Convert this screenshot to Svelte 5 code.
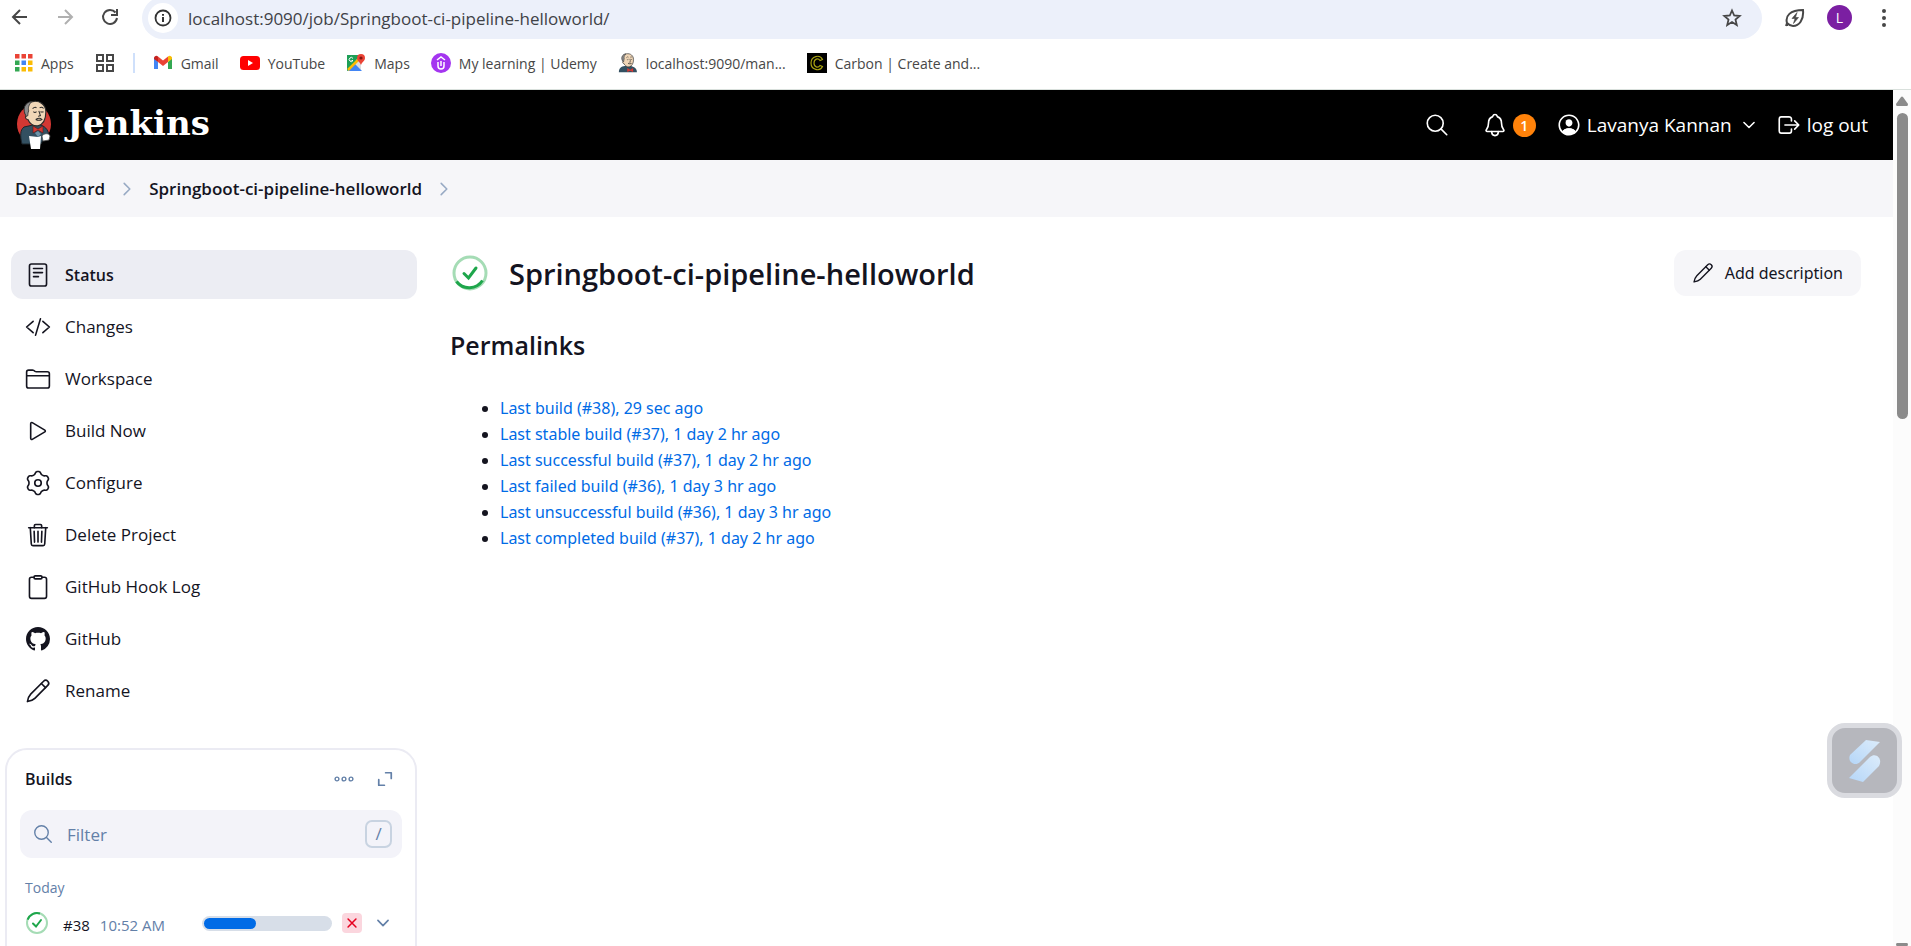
<script>
  const gear = (() => {
    const points = [];
    for (let i = 0; i < 120; i++) {
      const a = (i / 120) * Math.PI * 2;
      const r = 202 - 26 * Math.tanh(1.6 * Math.cos(6 * a));
      points.push(`${(256 + r * Math.cos(a)).toFixed(1)} ${(256 + r * Math.sin(a)).toFixed(1)}`);
    }
    return `M${points.join('L')}Z`;
  })();

  const icons = {
    search: ['M221 64a157 157 0 1 0 0 314a157 157 0 0 0 0-314z', 'M338 338L448 448'],
    bell: [
      'M427.68 351.43C402 320 383.87 304 383.87 217.35 383.87 138 343.35 109.73 310 96c-4.43-1.82-8.6-6-9.95-10.55C294.2 65.54 277.8 48 256 48s-38.21 17.55-44 37.47c-1.35 4.6-5.52 8.71-9.95 10.53-33.39 13.75-73.87 41.92-73.87 121.35C128.13 304 110 320 84.32 351.43 73.68 364.45 83 384 101.61 384h308.88c18.51 0 27.77-19.61 17.19-32.57z',
      'M320 384v16a64 64 0 0 1-128 0v-16'
    ],
    logout: [
      'M304 336v40a40 40 0 0 1-40 40H104a40 40 0 0 1-40-40V136a40 40 0 0 1 40-40h152c22 0 48 18 48 40v40',
      'M368 336l80-80-80-80M176 256h256'
    ],
    chevron: ['M112 184l144 144 144-144'],
    next: ['M184 112l144 144-144 144'],
    status: [
      'M128 40h256a40 40 0 0 1 40 40v352a40 40 0 0 1-40 40H128a40 40 0 0 1-40-40V80a40 40 0 0 1 40-40z',
      'M168 128h176M168 208h176M168 288h96'
    ],
    code: ['M160 368L32 256l128-112M352 368l128-112-128-112M304 96l-96 320'],
    folder: [
      'M440 432H72a40 40 0 0 1-40-40V120a40 40 0 0 1 40-40h75.89a40 40 0 0 1 22.19 6.72l27.84 18.56a40 40 0 0 0 22.19 6.72H440a40 40 0 0 1 40 40v240a40 40 0 0 1-40 40zM32 192h448'
    ],
    play: [
      'M112 111v290c0 17.44 17 28.52 31 20.16l247.9-148.37c12.12-7.25 12.12-26.33 0-33.58L143 90.84c-14-8.36-31 2.72-31 20.16z'
    ],
    gear: [gear, 'M256 192a64 64 0 1 0 0 128a64 64 0 0 0 0-128z'],
    trash: [
      'M104 112l20 320c1 18.500 14.400 32 32 32h200c17.670 0 31-13.500 32-32l20-320M72 112h368',
      'M184 112V72a24 24 0 0 1 24-24h96a24 24 0 0 1 24 24v40M256 184v212M180 184l8 212M332 184l-8 212'
    ],
    clipboard: [
      'M336 64h48a40 40 0 0 1 40 40v336a40 40 0 0 1-40 40H128a40 40 0 0 1-40-40V104a40 40 0 0 1 40-40h48',
      'M202 36h108a24 24 0 0 1 24 24v12a24 24 0 0 1-24 24H202a24 24 0 0 1-24-24V60a24 24 0 0 1 24-24z'
    ],
    pen: [
      'M366 64a57 57 0 0 1 82 82L194 400c-32 32-92 54-146 64c10-54 32-114 64-146z',
      'M322 108l82 82'
    ],
    expand: ['M272 96h144v144M96 272v144h144'],
    cross: ['M112 112l288 288M400 112L112 400']
  };

  const github =
    'M8 0C3.58 0 0 3.58 0 8c0 3.54 2.29 6.53 5.47 7.59.4.07.55-.17.55-.38 0-.19-.01-.82-.01-1.49-2.01.37-2.53-.49-2.69-.94-.09-.23-.48-.94-.82-1.13-.28-.15-.68-.52-.01-.53.63-.01 1.08.58 1.23.82.72 1.21 1.87.87 2.33.66.07-.52.28-.87.51-1.07-1.78-.2-3.64-.89-3.64-3.95 0-.87.31-1.59.82-2.15-.08-.2-.36-1.02.08-2.12 0 0 .67-.21 2.2.82.64-.18 1.32-.27 2-.27s1.36.09 2 .27c1.53-1.04 2.2-.82 2.2-.82.44 1.1.16 1.92.08 2.12.51.56.82 1.27.82 2.15 0 3.07-1.87 3.75-3.65 3.95.29.25.54.73.54 1.48 0 1.07-.01 1.93-.01 2.2 0 .21.15.46.55.38A8.01 8.01 0 0016 8c0-4.42-3.58-8-8-8z';

  const tasks = [
    ['Status', 'status'],
    ['Changes', 'code'],
    ['Workspace', 'folder'],
    ['Build Now', 'play'],
    ['Configure', 'gear'],
    ['Delete Project', 'trash'],
    ['GitHub Hook Log', 'clipboard'],
    ['GitHub', 'github'],
    ['Rename', 'pen']
  ];

  const permalinks = [
    'Last build (#38), 29 sec ago',
    'Last stable build (#37), 1 day 2 hr ago',
    'Last successful build (#37), 1 day 2 hr ago',
    'Last failed build (#36), 1 day 3 hr ago',
    'Last unsuccessful build (#36), 1 day 3 hr ago',
    'Last completed build (#37), 1 day 2 hr ago'
  ];

  const bookmarks = [
    ['gmail', 'Gmail'],
    ['youtube', 'YouTube'],
    ['maps', 'Maps'],
    ['udemy', 'My learning | Udemy'],
    ['jenkins', 'localhost:9090/man...'],
    ['carbon', 'Carbon | Create and...']
  ];

  const appColors = ['#ea4335', '#ea4335', '#ea4335', '#34a853', '#4285f4', '#fbbc04', '#34a853', '#fbbc04', '#fbbc04'];
  const progress = 41;
  let url = $state('localhost:9090/job/Springboot-ci-pipeline-helloworld/');
  let filter = $state('');
</script>

{#snippet icon(name, size, width = 32)}
  {#if name === 'github'}
    <svg width={size} height={size} viewBox="0 0 16 16" aria-hidden="true"><path d={github} fill="currentColor" /></svg>
  {:else}
    <svg width={size} height={size} viewBox="0 0 512 512" fill="none" stroke="currentColor" stroke-width={width} stroke-linecap="round" stroke-linejoin="round" aria-hidden="true">
      {#each icons[name] as d}<path {d} />{/each}
    </svg>
  {/if}
{/snippet}

{#snippet butlerHead()}
  <path d="M12 20C7 12 10 3 20 2c10-2 17 5 17 13 0 9-3 16-10 18-6 1-11-3-13-8-3 0-4-3-2-5z" fill="#f0d6b7" stroke="#2b2b2b" stroke-width="1.500" />
  <path d="M12 21C6 12 10 3 19 2c-4 4-5 8-4 12-1 2-1 4-1 6z" fill="#8c8c8c" stroke="#2b2b2b" />
  <path d="M20 11q3-3 5-1M29 10q3-2 5 1M21 15q2 2 4 0M30 15q2 1 4 0M28 14l2 6-3 1M24 25q5-3 8 0-4 2-8 0" fill="none" stroke="#2b2b2b" stroke-width="1.300" />
{/snippet}

<div class="browser">
  <div class="toolbar">
    <div class="history">
      <button aria-label="Back"><svg width="18" height="18" viewBox="0 0 18 18" fill="none" stroke="#474747" stroke-width="2"><path d="M16 9H3M9 2L2 9l7 7" /></svg></button>
      <button aria-label="Forward"><svg width="18" height="18" viewBox="0 0 18 18" fill="none" stroke="#b0b0b0" stroke-width="2"><path d="M2 9h13M9 2l7 7-7 7" /></svg></button>
      <button aria-label="Reload"><svg width="18" height="18" viewBox="0 0 18 18" fill="none" stroke="#474747" stroke-width="2"><path d="M14.500 4.500A7 7 0 1 0 16 10M16 1v6h-6" /></svg></button>
    </div>
    <div class="address">
      <button class="info" aria-label="View site information">
        <svg width="18" height="18" viewBox="0 0 18 18"><circle cx="9" cy="9" r="7.500" fill="none" stroke="#333" stroke-width="1.800" /><path d="M9 8v5M9 5v1.800" stroke="#333" stroke-width="2" /></svg>
      </button>
      <input class="url" aria-label="Address" bind:value={url} />
      <button class="star" aria-label="Bookmark this page">
        <svg width="20" height="20" viewBox="0 0 20 20"><path d="M10 2.500l2.200 5 5.500.5-4.200 3.600 1.300 5.400L10 14.100 5.200 17l1.300-5.400L2.300 8l5.500-.5z" fill="none" stroke="#474747" stroke-width="1.800" /></svg>
      </button>
    </div>
    <button class="leaf" aria-label="Energy Saver">
      <svg width="20" height="20" viewBox="0 0 20 20" fill="none" stroke="#474747" stroke-width="2"><path d="M2 18v-3c-2-7 3-13 16-13 1 10-4 16-10 16-3 0-4-1-6-3l-1 3" /><path d="M12 4.500L7 10.500h3l-1.500 5 5-6h-3z" fill="#474747" stroke-width=".6" /></svg>
    </button>
    <button class="avatar" aria-label="Profile">L</button>
    <button class="menu" aria-label="Menu"><svg width="6" height="20" viewBox="0 0 6 20" fill="#474747"><circle cx="3" cy="3" r="2" /><circle cx="3" cy="10" r="2" /><circle cx="3" cy="17" r="2" /></svg></button>
  </div>
  <nav class="bookmarks" aria-label="Bookmarks">
    <a href="#apps" class="apps">
      <svg width="18" height="18" viewBox="0 0 18 18" aria-hidden="true">
        {#each appColors as color, i}<rect x={(i % 3) * 6.500} y={Math.floor(i / 3) * 6.500} width="4.500" height="4.500" fill={color} />{/each}
      </svg>
      Apps
    </a>
    <button class="groups" aria-label="Tab groups">
      <svg width="20" height="20" viewBox="0 0 20 20" fill="none" stroke="#474747" stroke-width="2"><path d="M2 2h6v6H2zM12 2h6v6h-6zM2 12h6v6H2zM12 12h6v6h-6z" /></svg>
    </button>
    <span class="separator"></span>
    {#each bookmarks as [kind, label]}
      <a href="#{kind}" class="bookmark">
        <svg width="20" height="20" viewBox="0 0 20 20" aria-hidden="true">
          {#if kind === 'gmail'}
            <path d="M1 4v12h4V9z" fill="#4285f4" /><path d="M19 4v12h-4V9z" fill="#34a853" />
            <path d="M1 5.500C1 3 3.500 2 5 3.500V9L1 6z" fill="#c5221f" /><path d="M19 5.500C19 3 16.500 2 15 3.500V9l4-3z" fill="#fbbc04" />
            <path d="M5 3.500l5 4 5-4V9l-5 4-5-4z" fill="#ea4335" />
          {:else if kind === 'youtube'}
            <rect y="3" width="20" height="14" rx="3.500" fill="#f00" /><path d="M8 7l5 3-5 3z" fill="#fff" />
          {:else if kind === 'maps'}
            <path d="M1 2h14v16H1z" fill="#dcdcdc" /><path d="M1 2h13L3 17l-2 1z" fill="#1e9f57" />
            <path d="M2 18l7-7 7 7z" fill="#4285f4" /><path d="M2 17L14 5" stroke="#fbbc04" stroke-width="2.500" />
            <path d="M15 12C14 9 11 8 11 5a4 4 0 0 1 8 0c0 3-3 4-4 7z" fill="#ea4335" /><circle cx="15" cy="5" r="1.600" fill="#811411" />
            <path d="M7 5.500a2 2 0 1 0 0 2H5.500" fill="none" stroke="#fff" />
          {:else if kind === 'udemy'}
            <circle cx="10" cy="10" r="10" fill="#a435f0" /><path d="M6 7l4-3 4 3M7 9v4c0 4 6 4 6 0V9M10 8v5" fill="none" stroke="#fff" stroke-width="1.500" />
          {:else if kind === 'jenkins'}
            <g transform="scale(.42)">
              <path d="M2 46c0-10 6-14 14-15h15c9 3 14 6 14 15z" fill="#335061" />{@render butlerHead()}
              <path d="M22 36l7 4 7-4v9l-7-3-7 3z" fill="#d33833" />
            </g>
          {:else}
            <rect width="20" height="20" fill="#000" /><path d="M15.500 6.500C13 1 4 3 4 10s9 9 11.500 3.500l-2.500-1c-2 3-6 1.500-6-2.500s4-5.500 6-2.500z" fill="none" stroke="#a8a212" stroke-width="1.200" />
          {/if}
        </svg>
        {label}
      </a>
    {/each}
  </nav>

  <div class="viewport">
    <div class="page">
      <header>
        <a class="brand" href="#home">
          <svg width="36" height="50" viewBox="0 0 36 50" aria-hidden="true">
            <ellipse cx="18" cy="24" rx="17" ry="19" fill="#d33833" />
            <path d="M6 44C4 36 4 30 8 27l9-2h8c5 2 8 6 8 12l-6 3-2 4z" fill="#335061" stroke="#1b242b" />
            <g transform="translate(1 0) scale(.78)">{@render butlerHead()}</g>
            <path d="M17 26l5 3 5-3v7l-5-3-5 3z" fill="#d33833" stroke="#5c1714" stroke-width=".6" />
            <path d="M19 33l3-2 3 3-3 3z" fill="#6d93a8" />
            <path d="M13 36l9 1 3-1-1 13H15z" fill="#fff" />
            <path d="M26 36c2-3 7-3 8 0l-1 4-6 1z" fill="#fff" stroke="#555" stroke-width=".8" />
          </svg>
          <span>Jenkins</span>
        </a>
        <div class="actions">
          <button class="find" aria-label="Search">{@render icon('search', 26)}</button>
          <button class="alerts" aria-label="Notifications">{@render icon('bell', 26)}<span class="count">1</span></button>
          <a class="user" href="#user">
            <svg width="26" height="26" viewBox="0 0 512 512" fill="currentColor" aria-hidden="true">
              <path d="M258.9 48C141.92 46.42 46.42 141.92 48 258.9c1.56 112.19 92.91 203.54 205.1 205.1 117 1.6 212.48-93.9 210.88-210.88C462.44 140.91 371.09 49.56 258.9 48zm126.42 327.25a4 4 0 01-6.14-.32 124.27 124.27 0 00-32.35-29.59C321.37 329 289.11 320 256 320s-65.37 9-90.83 25.34a124.24 124.24 0 00-32.35 29.58 4 4 0 01-6.14.32A175.32 175.32 0 0180 259c-1.63-97.31 78.22-178.76 175.57-179S432 158.81 432 256a175.32 175.32 0 01-46.68 119.25z" />
              <path d="M126 375c22-34 76-55 130-55s108 21 130 55c-70 75-190 75-260 0z" />
              <path d="M256 144c-19.72 0-37.55 7.39-50.22 20.82s-19 32-17.57 51.93C191.11 256 221.52 288 256 288s64.83-32 67.79-71.24c1.48-19.74-4.8-38.14-17.68-51.82C293.39 151.44 275.59 144 256 144z" />
            </svg>
            Lavanya Kannan
          </a>
          <button class="user-menu" aria-label="User menu">{@render icon('chevron', 18, 44)}</button>
          <a class="logout" href="#logout">{@render icon('logout', 26)}log out</a>
        </div>
      </header>

      <nav class="crumbs" aria-label="Breadcrumb">
        <a href="#dashboard">Dashboard</a>
        {@render icon('next', 20, 40)}
        <a href="#job">Springboot-ci-pipeline-helloworld</a>
        {@render icon('next', 20, 40)}
      </nav>

      <div class="body">
        <aside>
          <nav class="tasks" aria-label="Tasks">
            {#each tasks as [label, name], i}
              <a href="#{name}" class:active={i === 0}>{@render icon(name, name === 'github' ? 24 : 26)}{label}</a>
            {/each}
          </nav>

          <section class="builds">
            <div class="builds-head">
              <h2>Builds</h2>
              <button aria-label="More"><svg width="20" height="6" viewBox="0 0 20 6" fill="none" stroke="currentColor" stroke-width="1.400"><circle cx="3" cy="3" r="1.900" /><circle cx="10" cy="3" r="1.900" /><circle cx="17" cy="3" r="1.900" /></svg></button>
              <button aria-label="Expand">{@render icon('expand', 20, 44)}</button>
            </div>
            <label class="filter">
              {@render icon('search', 22)}
              <input placeholder="Filter" aria-label="Filter builds" bind:value={filter} />
              <kbd>/</kbd>
            </label>
            <h3>Today</h3>
            <div class="build">
              <svg width="24" height="24" viewBox="0 0 24 24" fill="none" stroke-width="2" aria-hidden="true">
                <circle cx="12" cy="12" r="10" stroke="#a5dcb5" /><path d="M2.600 8.600A10 10 0 0 1 15 2.500" stroke="#1ea64b" />
                <path d="M8 12.500l3 3L16 9" stroke="#1ea64b" stroke-linecap="round" />
              </svg>
              <a href="#b38">#38</a>
              <time>10:52 AM</time>
              <div class="progress" role="progressbar" aria-label="Build progress" aria-valuenow={progress}><span style:width="{progress}%"></span></div>
              <button class="stop" aria-label="Stop build">{@render icon('cross', 14, 56)}</button>
              <button class="more" aria-label="Build menu">{@render icon('chevron', 18, 48)}</button>
            </div>
          </section>
        </aside>

        <main>
          <div class="title">
            <svg width="36" height="36" viewBox="0 0 36 36" fill="none" stroke-width="3" aria-hidden="true">
              <circle cx="18" cy="18" r="16" stroke="#a5dcb5" /><path d="M4.500 26.500a16 16 0 0 0 26-1" stroke="#1ea64b" />
              <path d="M12 18.500l4.500 4.500L24 13" stroke="#1ea64b" stroke-linecap="round" />
            </svg>
            <h1>Springboot-ci-pipeline-helloworld</h1>
            <button>{@render icon('pen', 22)}Add description</button>
          </div>
          <h2>Permalinks</h2>
          <ul>
            {#each permalinks as text}<li><a href="#permalink">{text}</a></li>{/each}
          </ul>
        </main>
      </div>
    </div>

    <div class="scrollbar" aria-hidden="true">
      <svg width="12" height="10" viewBox="0 0 12 10" fill="#8b8b8b"><path d="M5 1q1-1 2 0l5 7q0 2-1 2H1q-1 0-1-2z" /></svg>
      <span class="thumb"></span>
      <svg class="down" width="12" height="10" viewBox="0 0 12 10" fill="#8b8b8b"><path d="M5 9q1 1 2 0l5-7q0-2-1-2H1Q0 0 0 2z" /></svg>
    </div>
  </div>
</div>

<button class="widget" aria-label="Open assistant">
  <svg width="34" height="44" viewBox="0 0 34 44" aria-hidden="true">
    <defs><linearGradient id="glow" x1="0" y1="1" x2="1" y2="0"><stop offset="0" stop-color="#b5d6f8" /><stop offset="1" stop-color="#dcecfb" /></linearGradient></defs>
    <path d="M18 1l14 2L12 23c-5 5-13 0-10-7z" fill="url(#glow)" />
    <path d="M1 39l21-21c6-5 13 2 9 9L15 43z" fill="url(#glow)" />
  </svg>
</button>

<style>
  :global(body) { margin: 0; background: #fff; overflow: hidden; }
  .browser, .widget { font-family: 'Open Sans', 'Noto Sans', sans-serif; color: #14141f; font-size: 17px; }
  .browser { display: flex; flex-direction: column; height: 100vh; }
  button { font: inherit; color: inherit; background: none; border: 0; padding: 0; display: flex; align-items: center; justify-content: center; }
  a { color: inherit; text-decoration: none; }
  input { font: inherit; border: 0; background: none; padding: 0; min-width: 0; outline: none; }
  svg { flex: none; display: block; }
  h1, h2, h3 { margin: 0; font-weight: 600; }

  .toolbar { display: flex; align-items: flex-start; height: 39px; }
  .history { display: flex; gap: 27px; padding: 8px 23px 0 11px; }
  .address { flex: 1; display: flex; align-items: center; height: 42px; margin-top: -3px; background: #ecf0fa; border-radius: 21px; padding: 0 20px 0 6px; }
  .info { width: 30px; height: 30px; border-radius: 50%; background: #fff; }
  .url { flex: 1; margin-left: 10px; color: #3f4247; }
  .leaf { margin: 8px 22px 0 23px; }
  .avatar { width: 25px; height: 25px; margin-top: 5px; border-radius: 50%; background: #7b1fa2; color: #fff; font-size: 14px; }
  .menu { margin: 8px 24px 0 29px; }

  .bookmarks { display: flex; align-items: center; height: 48px; padding: 0 0 2px 15px; border-bottom: 1px solid #d9e0dc; color: #474747; font-size: 14px; }
  .apps, .bookmark { display: flex; align-items: center; gap: 8px; }
  .groups { margin: 0 18px 0 21px; }
  .separator { width: 2px; height: 20px; background: #cfe0fb; margin-right: 18px; }
  .bookmark { margin-right: 21px; }

  .viewport { flex: 1; display: flex; min-height: 0; }
  .page { flex: 1; overflow: hidden; }
  header { display: flex; align-items: center; justify-content: space-between; height: 70px; padding: 0 25px 0 16px; background: #000; color: #fff; }
  .brand { display: flex; align-items: center; gap: 15px; font: bold 34px 'DejaVu Serif', serif; }
  .brand span { padding-bottom: 4px; }
  .actions { display: flex; align-items: center; font-size: 19px; }
  .find { margin-right: 32px; }
  .alerts { gap: 5px; margin-right: 20px; }
  .count { width: 23px; height: 23px; border-radius: 50%; background: #ff820a; font-size: 14px; line-height: 23px; font-weight: 600; text-align: center; }
  .user, .logout { display: flex; align-items: center; gap: 5px; }
  .user-menu { margin: 0 18px 0 8px; }

  .crumbs { display: flex; align-items: center; gap: 12px; height: 57px; padding-left: 15px; background: #f6f6f9; font-size: 17px; font-weight: 600; }
  .crumbs svg { color: #98aac4; }

  .body { display: flex; align-items: flex-start; }
  aside { flex: none; width: 417px; padding-top: 33px; }
  .tasks { display: flex; flex-direction: column; gap: 3px; padding-left: 11px; }
  .tasks a { display: flex; align-items: center; gap: 14px; height: 49px; padding-left: 14px; border-radius: 12px; }
  .tasks .active { background: #ecedf3; font-size: 16px; font-weight: 600; }
  .tasks svg { width: 26px; }

  .builds { margin: 33px 0 0 5px; border: 2px solid #ebebf3; border-radius: 22px; padding: 8px 13px 40px; color: #6380a8; }
  .builds-head { display: flex; align-items: center; height: 42px; gap: 21px; padding: 0 7px 0 5px; }
  .builds-head h2 { flex: 1; font-size: 16px; color: #14141f; }
  .filter { display: flex; align-items: center; height: 48px; margin-top: 10px; padding: 0 10px 0 12px; border-radius: 12px; background: #f3f3f9; }
  .filter input { flex: 1; margin-left: 13px; color: #14141f; }
  .filter input::placeholder { color: #6380a8; opacity: 1; }
  kbd { width: 23px; height: 24px; border: 2px solid #c8d3e1; border-radius: 7px; font: inherit; line-height: 24px; text-align: center; }
  h3 { margin: 18px 5px 0; font-size: 14px; font-weight: 400; line-height: 24px; }
  .build { display: flex; align-items: center; height: 36px; margin-top: 5px; padding-left: 5px; }
  .build a, time { padding-top: 3px; font-size: 15px; }
  .build a { margin-left: 14px; color: #14141f; }
  time { flex: 1; margin-left: 10px; }
  .progress { width: 126px; height: 11px; padding: 2px; border-radius: 8px; background: #d7dee8; }
  .progress span { display: block; height: 100%; border-radius: 6px; background: #006be6; }
  .stop { width: 20px; height: 20px; margin-left: 10px; border-radius: 4px; background: #fbd6de; color: #e6001f; }
  .more { margin: 0 10px 0 12px; }

  main { flex: 1; padding: 33px 32px 0 33px; font-family: 'Noto Sans', 'Open Sans', sans-serif; font-size: 16px; }
  h1, main h2 { font-family: 'Open Sans', 'Noto Sans', sans-serif; }
  .title { display: flex; align-items: center; height: 46px; padding-left: 2px; }
  h1 { flex: 1; margin-left: 21px; font-size: 29px; }
  .title button { height: 46px; gap: 11px; padding: 0 18px; border-radius: 12px; background: #f6f6f9; }
  main h2 { margin-top: 29px; font-size: 25px; line-height: 40px; }
  ul { margin: 30px 0 0; padding-left: 50px; }
  li { line-height: 26px; }
  li a { color: #006be6; }

  .scrollbar { display: flex; flex-direction: column; align-items: center; width: 18px; padding-top: 6px; background: #fcfcfc; }
  .thumb { flex: 0 0 306px; width: 11px; margin: 7px 0 auto; border-radius: 6px; background: #8b8b8b; }
  .down { margin-bottom: -7px; }

  .widget { position: fixed; right: 9px; bottom: 148px; width: 75px; height: 75px; border: 5px solid #dadbe0; border-radius: 18px; background: #b6b7bd; }
</style>
